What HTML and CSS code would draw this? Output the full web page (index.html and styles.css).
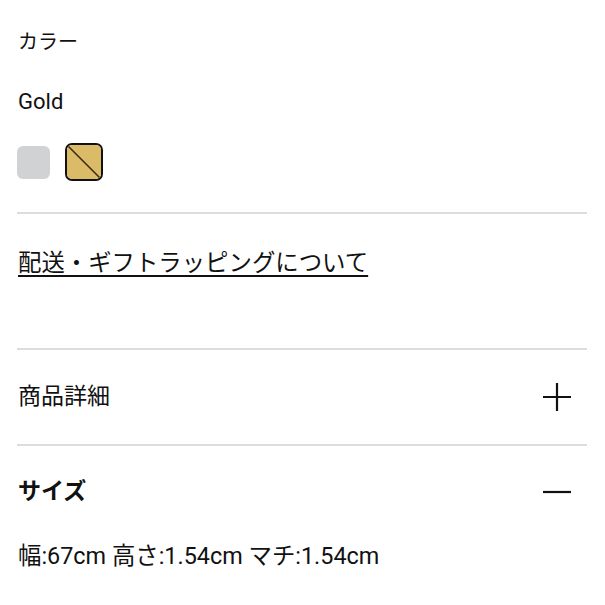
FILE: index.html
```html
<!DOCTYPE html>
<html lang="ja">
<head>
<meta charset="utf-8">
<link rel="stylesheet" href="styles.css">
</head>
<body>
<div class="page">
  <section class="color-section">
    <div class="label">カラー</div>
    <div class="value">Gold</div>
    <div class="swatches">
      <span class="swatch swatch-silver"></span>
      <span class="swatch-selected">
        <svg class="swatch-gold" viewBox="0 0 34 34" width="34" height="34">
          <rect x="0" y="0" width="34" height="34" fill="#dbba68"/>
          <line x1="1" y1="1" x2="33" y2="33" stroke="#3c2e0c" stroke-width="1.6"/>
        </svg>
      </span>
    </div>
  </section>
  <section class="link-section">
    <a class="info-link" href="#">配送・ギフトラッピングについて</a>
  </section>
  <section class="acc">
    <div class="acc-head">
      <span class="acc-title">商品詳細</span>
      <svg class="acc-icon" viewBox="0 0 28 28" width="28" height="28">
        <path d="M0 14H28M14 0V28" stroke="#111" stroke-width="2.2" fill="none"/>
      </svg>
    </div>
  </section>
  <section class="acc is-open">
    <div class="acc-head">
      <span class="acc-title bold">サイズ</span>
      <svg class="acc-icon" viewBox="0 0 28 28" width="28" height="28">
        <path d="M0 14H28" stroke="#111" stroke-width="2.2" fill="none"/>
      </svg>
    </div>
    <div class="acc-body">幅:67cm 高さ:1.54cm マチ:1.54cm</div>
  </section>
</div>
</body>
</html>
```
FILE: styles.css
```css
html, body {
  margin: 0;
  padding: 0;
  background: #fff;
}
body {
  font-family: "Roboto", "Noto Sans CJK JP", sans-serif;
  color: #111;
}
.page {
  padding: 28px 18px 0 17px;
}
.label {
  font-size: 20px;
  line-height: 28px;
  padding-left: 1px;
}
.value {
  font-size: 22px;
  line-height: 28px;
  margin-top: 32px;
  padding-left: 1px;
}
.swatches {
  display: flex;
  align-items: center;
  gap: 15px;
  margin-top: 27px;
  height: 38px;
}
.swatch {
  display: block;
  width: 33px;
  height: 33px;
  border-radius: 6px;
}
.swatch-silver {
  background: #d0d2d4;
}
.swatch-selected {
  display: block;
  width: 34px;
  height: 34px;
  border: 2px solid #111;
  border-radius: 7px;
  overflow: hidden;
}
.swatch-gold {
  display: block;
}
.color-section {
  padding-bottom: 31px;
}
.link-section {
  border-top: 2px solid #dcdcdc;
  padding-top: 34px;
  padding-bottom: 70px;
}
.info-link {
  font-size: 23.4px;
  line-height: 30px;
  color: #111;
  text-decoration: underline;
  text-decoration-thickness: 2px;
  text-underline-offset: 4px;
  padding-left: 1px;
}
.acc {
  border-top: 2px solid #dcdcdc;
}
.acc-head {
  display: flex;
  align-items: center;
  justify-content: space-between;
  height: 94px;
  padding-right: 16px;
  padding-left: 1px;
}
.is-open .acc-head {
  height: 91px;
}
.acc-title {
  font-size: 23px;
  line-height: 28px;
}
.bold {
  font-weight: 700;
}
.acc-icon {
  display: block;
}
.acc-body {
  font-size: 23.4px;
  line-height: 28px;
  margin-top: 5px;
  padding-left: 1px;
}
```
